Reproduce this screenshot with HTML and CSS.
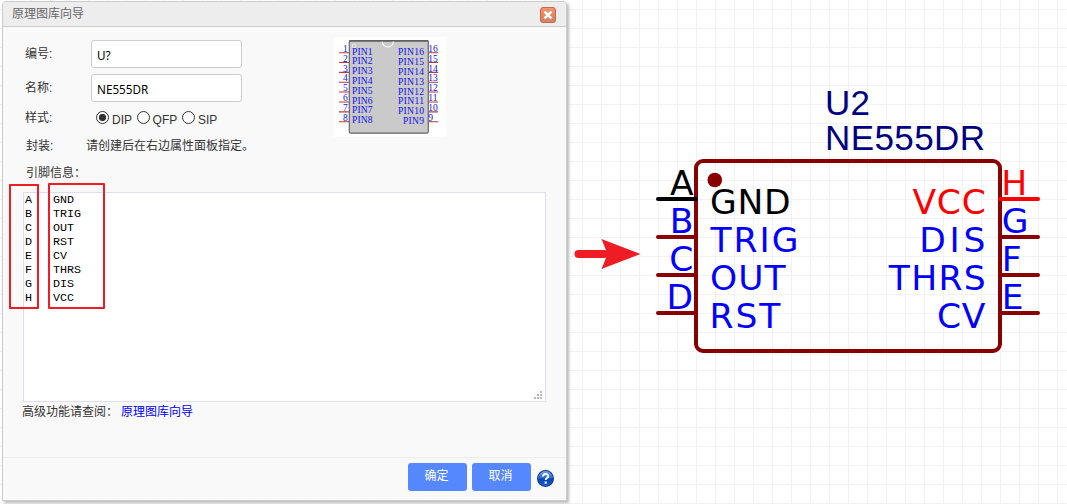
FILE: index.html
```html
<!DOCTYPE html>
<html lang="zh-CN">
<head>
<meta charset="utf-8">
<title>原理图库向导</title>
<link rel="stylesheet" href="styles.css">
</head>
<body>
<main class="workspace">
  <section class="dialog">
    <header class="dialog-header">
      <h1 class="dialog-title">原理图库向导</h1>
      <svg class="close" viewBox="0 0 16 16">
        <defs><linearGradient id="closeFill" x1="0" y1="0" x2="0" y2="1"><stop offset="0" stop-color="#ee9874"/><stop offset=".5" stop-color="#ea8259"/><stop offset="1" stop-color="#cc8867"/></linearGradient></defs>
        <rect x=".5" y=".5" width="15" height="15" rx="2.5" fill="url(#closeFill)" stroke="#c36a50"/>
        <path d="M5.4 5.4l5.2 5.2M10.6 5.4l-5.2 5.2" stroke="#fff" stroke-width="2.5" stroke-linecap="square"/>
      </svg>
    </header>
    <div class="dialog-body">
      <div class="top">
        <div class="form">
          <div class="row field"><span class="label">编号:</span><div class="input">U?</div></div>
          <div class="row field"><span class="label">名称:</span><div class="input">NE555DR</div></div>
          <div class="row styles"><span class="label">样式:</span>
            <span class="radio checked"></span><span class="option">DIP</span>
            <span class="radio"></span><span class="option">QFP</span>
            <span class="radio"></span><span class="option">SIP</span>
          </div>
          <div class="row package"><span class="label">封装:</span><span class="hint">请创建后在右边属性面板指定。</span></div>
          <div class="row pins-title"><span class="label wide">引脚信息：</span></div>
        </div>
        <svg class="preview" viewBox="334 37 112 100">
          <rect x="334" y="37" width="112" height="100" fill="#fff"/>
          <path d="M339 52.7h10M339 62.5h10M339 72.4h10M339 82.2h10M339 92h10M339 102h10M339 111.9h10M339 121.7h10M428 52.7h10M428 62.5h10M428 72.4h10M428 82.2h10M428 92h10M428 102h10M428 111.9h10M428 121.7h10" stroke="#b33c3c" stroke-width="1.1"/>
          <rect x="349.3" y="40.8" width="79" height="92.4" rx="1.5" fill="#cacaca" stroke="#666" stroke-width="1.2"/>
          <path d="M349 40.8h79.5" stroke="#555" stroke-width="1.3"/>
          <path d="M382.2 41.4a5.6 5.6 0 0 0 11.2 0" fill="none" stroke="#fff" stroke-width="1.2"/>
          <circle cx="354" cy="46" r="1.8" fill="none" stroke="#eee" stroke-width=".8"/>
          <g class="pin-name">
            <text x="352" y="54.5" textLength="20.5">PIN1</text><text x="352" y="64.3" textLength="20.5">PIN2</text><text x="352" y="74.1" textLength="20.5">PIN3</text><text x="352" y="84" textLength="20.5">PIN4</text><text x="352" y="93.8" textLength="20.5">PIN5</text><text x="352" y="103.6" textLength="20.5">PIN6</text><text x="352" y="113.3" textLength="20.5">PIN7</text><text x="352" y="123" textLength="20.5">PIN8</text>
            <text x="398" y="55.2" textLength="26">PIN16</text><text x="398" y="65" textLength="26">PIN15</text><text x="398" y="75" textLength="26">PIN14</text><text x="398" y="84.8" textLength="26">PIN13</text><text x="398" y="94.6" textLength="26">PIN12</text><text x="398" y="104.4" textLength="26">PIN11</text><text x="398" y="114.2" textLength="26">PIN10</text><text x="403" y="124" textLength="21">PIN9</text>
          </g>
          <g class="pin-no">
            <text x="343" y="52">1</text><text x="343" y="61.8">2</text><text x="343" y="71.6">3</text><text x="343" y="81.4">4</text><text x="343" y="91.2">5</text><text x="343" y="101">6</text><text x="343" y="110.8">7</text><text x="343" y="120.6">8</text>
            <text x="428.3" y="52">16</text><text x="428.3" y="61.8">15</text><text x="428.3" y="71.6">14</text><text x="428.3" y="81.4">13</text><text x="428.3" y="91.2">12</text><text x="428.3" y="101">11</text><text x="428.3" y="110.8">10</text><text x="428.3" y="120.6">9</text>
          </g>
        </svg>
      </div>
      <div class="pin-list">
        <div class="pin-grid">
          <span>A</span><span>GND</span><span>B</span><span>TRIG</span><span>C</span><span>OUT</span><span>D</span><span>RST</span><span>E</span><span>CV</span><span>F</span><span>THRS</span><span>G</span><span>DIS</span><span>H</span><span>VCC</span>
        </div>
        <div class="mark mark-number"></div>
        <div class="mark mark-name"></div>
        <svg class="grip" viewBox="0 0 8 8" fill="#b8b8b8"><path d="M6 0h2v2H6zM3 3h2v2H3zM6 3h2v2H6zM0 6h2v2H0zM3 6h2v2H3zM6 6h2v2H6z"/></svg>
      </div>
      <p class="more"><span>高级功能请查阅：</span><a class="link">原理图库向导</a></p>
    </div>
    <footer class="dialog-footer">
      <div class="button">确定</div>
      <div class="button">取消</div>
      <svg class="help" viewBox="0 0 16 16">
        <defs><linearGradient id="helpFill" x1="0" y1="0" x2="0" y2="1"><stop offset="0" stop-color="#7aa6e6"/><stop offset=".45" stop-color="#2f6ad0"/><stop offset=".55" stop-color="#0843ae"/><stop offset="1" stop-color="#1d66d8"/></linearGradient></defs>
        <circle cx="8" cy="8" r="7.5" fill="url(#helpFill)" stroke="#123f8e"/>
        <path d="M5.6 6.2c0-3.2 5-3.2 5-.4 0 1.8-2.4 1.8-2.4 3.6" fill="none" stroke="#fff" stroke-width="1.8"/>
        <rect x="7.2" y="10.8" width="2" height="2" fill="#fff"/>
      </svg>
    </footer>
  </section>
  <svg class="schematic" viewBox="568 0 499 504">
    <path d="M578.5 254H604" stroke="#ee1c25" stroke-width="8" stroke-linecap="round"/>
    <path d="M601.5 239L640.5 254L601.5 269L607.5 254z" fill="#ee1c25"/>
    <rect x="696" y="161" width="304" height="190" rx="7" fill="none" stroke="#880000" stroke-width="4"/>
    <circle cx="714.8" cy="180" r="7.3" fill="#880000"/>
    <path d="M658 237H696M658 275H696M658 313H696M1000 237H1038M1000 275H1038M1000 313H1038" class="wire"/>
    <path d="M658 199H696" class="wire ground"/>
    <path d="M1000 199H1038" class="wire power"/>
    <g class="title">
      <text x="825" y="115" textLength="45">U2</text>
      <text x="825" y="150" textLength="160">NE555DR</text>
    </g>
    <g class="symbol">
      <text x="669.9" y="195" class="black">A</text>
      <text x="669.8" y="233">B</text>
      <text x="669.2" y="271">C</text>
      <text x="666.5" y="309">D</text>
      <text x="1001.3" y="195" class="red">H</text>
      <text x="1001.8" y="233">G</text>
      <text x="1001.8" y="271">F</text>
      <text x="1001.8" y="309">E</text>
      <text x="709.9" y="214" textLength="80.8" class="black">GND</text>
      <text x="710.5" y="252" textLength="88">TRIG</text>
      <text x="709.9" y="290" textLength="75.8">OUT</text>
      <text x="709.5" y="328" textLength="70.8">RST</text>
      <text x="912.5" y="214" textLength="73.3" class="red">VCC</text>
      <text x="919.2" y="252" textLength="66.2">DIS</text>
      <text x="888.7" y="290" textLength="97">THRS</text>
      <text x="937" y="328" textLength="48.3">CV</text>
    </g>
  </svg>
</main>
</body>
</html>
```
FILE: styles.css
```css
* { box-sizing: border-box; }
body {
  margin: 0;
  font: 12px/16px "Liberation Sans", "Noto Sans CJK SC", sans-serif;
  color: #333;
}
.workspace {
  display: flex;
  width: 1067px;
  height: 504px;
  overflow: hidden;
  background-color: #fff;
  background-image: linear-gradient(90deg, #f2f2f2 1px, transparent 1px), linear-gradient(#f2f2f2 1px, transparent 1px);
  background-size: 19px 19px;
  background-position: 12px 9px;
}
.dialog {
  display: flex;
  flex-direction: column;
  flex: none;
  width: 565px;
  height: 500px;
  margin: 1px 1px 0 2px;
  border: 1px solid #ccc;
  border-radius: 4px 4px 0 0;
  background: #f9f9f9;
  box-shadow: 2px 2px 3px #bbb;
}
.dialog-header {
  display: flex;
  justify-content: space-between;
  height: 25px;
  padding: 5px 10px 0 9px;
  border-bottom: 1px solid #ccc;
  border-radius: 3px 3px 0 0;
  background: #ededed;
}
.dialog-title { margin: -1px 0 0; font-size: 12px; font-weight: normal; line-height: 16px; color: #666; }
.close { width: 16px; height: 16px; }
.dialog-body { flex: 1; padding: 10px 20px 0; }
.top { display: flex; justify-content: space-between; height: 155px; }
.form { padding: 3px 0 0 2px; }
.row { display: flex; align-items: center; }
.label { width: 66px; }
.wide { width: auto; }
.field { height: 28px; margin-bottom: 6px; }
.input {
  width: 151px;
  height: 28px;
  padding: 1px 5px 0;
  border: 1px solid #ccc;
  border-radius: 3px;
  background: #fff;
  font: 11.7px/26px "Noto Sans", sans-serif;
  color: #000;
}
.styles { height: 19px; }
.styles .label { width: 71px; }
.radio {
  width: 13px;
  height: 13px;
  border: 1px solid #333;
  border-radius: 50%;
  background: #fff;
}
.checked { background: radial-gradient(circle, #333 3.3px, #fff 4px); }
.option { margin: 4px 4.6px 0 3px; }
.package { height: 38px; padding-left: 1px; }
.package .label { width: 60px; }
.pins-title { height: 16px; padding-left: 1px; }
.preview { width: 112px; height: 100px; margin-right: 100px; }
.pin-name, .pin-no { font-family: "Liberation Serif", serif; fill: #11e; }
.pin-name { font-size: 9.6px; }
.pin-no { font-size: 9.5px; }
.pin-list {
  position: relative;
  width: 523px;
  height: 210px;
  border: 1px solid #dde;
  background: #fff;
}
.pin-grid {
  display: grid;
  grid-template-columns: 28px auto;
  justify-content: start;
  padding: 0 1px;
  font: 11.7px/14px "Liberation Mono", monospace;
  color: #000;
}
.mark { position: absolute; border: 2px solid #ee1c25; border-radius: 1px; }
.mark-number { left: -15px; top: -9px; width: 30px; height: 125px; }
.mark-name { left: 24px; top: -10px; width: 57px; height: 126px; }
.grip { position: absolute; right: 3px; bottom: 2px; width: 8px; height: 8px; }
.more { display: flex; margin: 2px 0 0 -1px; }
.link { margin-left: 3px; color: #00f; }
.dialog-footer {
  display: flex;
  justify-content: flex-end;
  gap: 5px;
  height: 43px;
  padding: 5px 12px 0 0;
  border-top: 1px solid #eee;
}
.button {
  width: 59px;
  height: 28px;
  padding-right: 2px;
  border-radius: 3px;
  background: #5588ff;
  color: #fff;
  line-height: 27px;
  text-align: center;
}
.help { width: 17px; height: 17px; margin: 7px 0 0 1px; }
.schematic { width: 499px; height: 504px; }
.wire { fill: none; stroke: #880000; stroke-width: 4; stroke-linecap: round; }
.ground { stroke: #000; }
.power { stroke: #f00; }
.title { font: 35px "Liberation Sans", sans-serif; fill: #000080; }
.symbol { font: 34.5px "DejaVu Sans", Verdana, sans-serif; fill: #00f; }
.black { fill: #000; }
.red { fill: #f00; }
```
